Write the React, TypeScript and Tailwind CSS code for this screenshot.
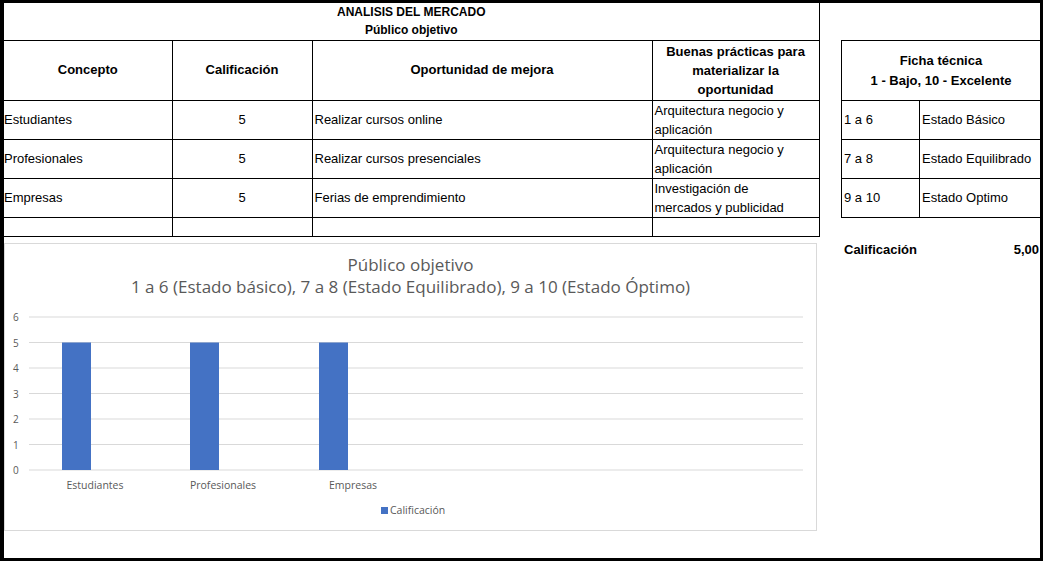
import React from "react";

const F = { fontFamily: '"Liberation Sans", Arial, sans-serif' };

export default function App() {
  const rows = [
    ["Estudiantes", "Realizar cursos online", "Arquitectura negocio y aplicación"],
    ["Profesionales", "Realizar cursos presenciales", "Arquitectura negocio y aplicación"],
    ["Empresas", "Ferias de emprendimiento", "Investigación de mercados y publicidad"],
  ];
  const grid = [0, 1, 2, 3, 4, 5, 6];
  const y0 = 473 - 247;
  const unit = 25.5;
  return (
    <div className="w-[1043px] h-[561px] bg-black pt-[3px] pl-[4px] pr-[3px] pb-[3px]" style={F}>
      <div className="w-full h-full bg-white flex text-[13px] text-black overflow-hidden">
        <div className="w-[815px] shrink-0 flex flex-col">
          <table className="border-collapse table-fixed w-[815px]">
            <colgroup>
              <col className="w-[168px]" />
              <col className="w-[140px]" />
              <col className="w-[340px]" />
              <col className="w-[167px]" />
            </colgroup>
            <tbody>
              <tr className="h-[37px]">
                <td colSpan={4} className="border-b border-r border-black text-center font-bold text-[12px] leading-[18px]">
                  ANALISIS DEL MERCADO<br />Público objetivo
                </td>
              </tr>
              <tr className="h-[60px] font-bold">
                <td className="border-b border-r border-black text-center">Concepto</td>
                <td className="border border-black text-center">Calificación</td>
                <td className="border border-black text-center">Oportunidad de mejora</td>
                <td className="border border-black text-center leading-[19px]">Buenas prácticas para materializar la oportunidad</td>
              </tr>
              {rows.map((r) => (
                <tr key={r[0]} className="h-[39px]">
                  <td className="border-b border-r border-black pl-0 p-0">{r[0]}</td>
                  <td className="border border-black text-center p-0">5</td>
                  <td className="border border-black pl-[2px] p-0">{r[1]}</td>
                  <td className="border border-black pl-[2px] pr-[14px] py-0 leading-[19px]">{r[2]}</td>
                </tr>
              ))}
              <tr className="h-[19px]">
                <td className="border-b border-r border-black p-0"></td>
                <td className="border border-black p-0"></td>
                <td className="border border-black p-0"></td>
                <td className="border border-black p-0"></td>
              </tr>
            </tbody>
          </table>
          <div className="mt-[6px] w-[813px] h-[288px] border border-[#d9d9d9] relative">
            <div className="text-center text-[#595959] text-[17px] leading-[22px] pt-[10px]" style={{ fontFamily: '"Open Sans", sans-serif' }}>
              Público objetivo<br />1 a 6 (Estado básico), 7 a 8 (Estado Equilibrado), 9 a 10 (Estado Óptimo)
            </div>
            <svg className="absolute left-0 top-0" width="813" height="288">
              {grid.map((g) => (
                <g key={g}>
                  <line x1={24} x2={798} y1={y0 - g * unit} y2={y0 - g * unit} stroke="#d9d9d9" />
                  <text x={8} y={y0 - g * unit + 4} fontSize="10" fill="#595959" fontFamily="Open Sans">{g}</text>
                </g>
              ))}
              {[57, 185, 314].map((x) => (
                <rect key={x} x={x} y={y0 - 5 * unit} width={29} height={5 * unit} fill="#4472c4" />
              ))}
              {[["Estudiantes", 90], ["Profesionales", 218], ["Empresas", 348]].map(([t, x]) => (
                <text key={t as string} x={x as number} y={y0 + 19} fontSize="10.5" fill="#595959" textAnchor="middle" fontFamily="Open Sans">{t}</text>
              ))}
              <rect x={376} y={263} width={7} height={7} fill="#4472c4" />
              <text x={385} y={270} fontSize="10.5" fill="#595959" fontFamily="Open Sans">Calificación</text>
            </svg>
          </div>
        </div>
        <div className="w-[22px] shrink-0"></div>
        <div className="w-[199px] min-w-0 shrink-0 flex flex-col overflow-hidden">
          <div className="h-[37px] shrink-0"></div>
          <table className="border-collapse table-fixed w-[210px]">
            <colgroup>
              <col className="w-[78px]" />
              <col className="w-[132px]" />
            </colgroup>
            <tbody>
              <tr className="h-[60px]">
                <td colSpan={2} className="border border-black text-center font-bold leading-[20px] pr-[11px]">Ficha técnica<br />1 - Bajo, 10 - Excelente</td>
              </tr>
              {[["1 a 6", "Estado Básico"], ["7 a 8", "Estado Equilibrado"], ["9 a 10", "Estado Optimo"]].map((r) => (
                <tr key={r[0]} className="h-[39px]">
                  <td className="border border-black pl-[2px] p-0">{r[0]}</td>
                  <td className="border border-black pl-[2px] p-0 whitespace-nowrap">{r[1]}</td>
                </tr>
              ))}
            </tbody>
          </table>
          <div className="w-[199px] flex justify-between font-bold mt-[22px] pl-[3px] pr-[1px]">
            <span>Calificación</span>
            <span>5,00</span>
          </div>
        </div>
      </div>
    </div>
  );
}
